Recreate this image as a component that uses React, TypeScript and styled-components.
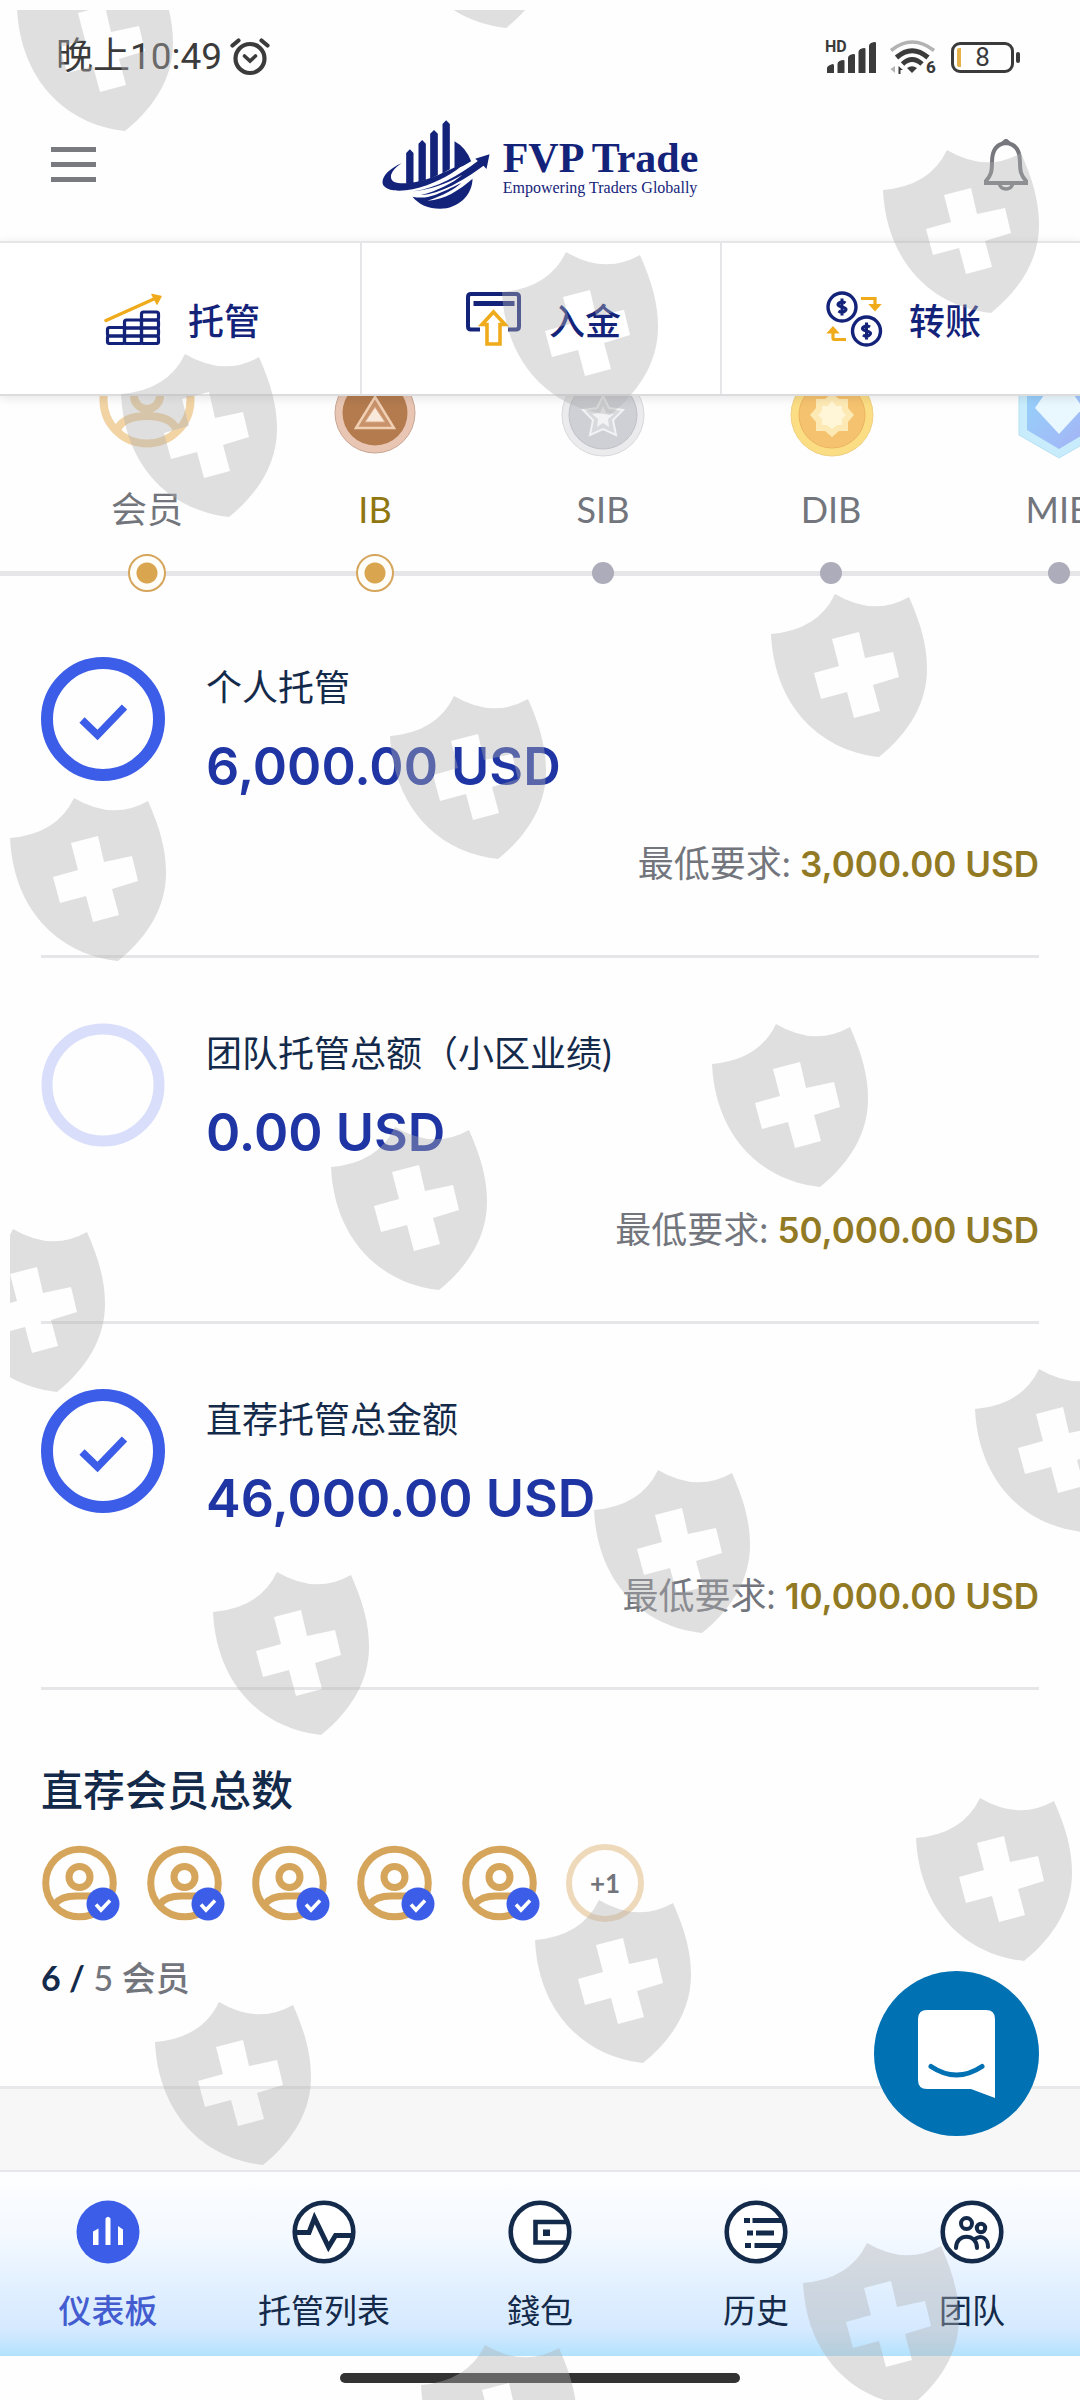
import React from "react";
import styled, { createGlobalStyle } from "styled-components";

const color = {
  navy: "#142a4a",
  brand: "#14237a",
  blue: "#3b5de7",
  amount: "#1f35a3",
  gold: "#927a24",
  tan: "#d6a55c",
  amber: "#f0ab1c",
  gray: "#73757d",
  line: "#e6e6e8",
};

const latin = '"Lato", "Noto Sans CJK SC", sans-serif';
const numeric = '"Inter", "Noto Sans CJK SC", sans-serif';

const GlobalStyle = createGlobalStyle`
  * { box-sizing: border-box; }
  body { margin: 0; background: #fefefe; font-family: ${latin}; color: ${color.navy}; }
  button { border: 0; padding: 0; background: none; font: inherit; color: inherit; cursor: pointer; }
  a { color: inherit; text-decoration: none; }
  h2, h3, p, ul, ol { margin: 0; padding: 0; list-style: none; }
  svg { display: block; flex: none; }
`;

const Page = styled.div`
  position: relative;
  display: flex;
  flex-direction: column;
  min-height: 100vh;
  overflow: hidden;
`;

/* ---------- status bar ---------- */

const StatusBar = styled.div`
  display: flex;
  align-items: center;
  justify-content: space-between;
  padding: 26px 66px 0 56px;
  height: 88px;
  color: #3b3b3b;
`;

const StatusGroup = styled.div<{ $gap: number }>`
  display: flex;
  align-items: center;
  gap: ${(p) => p.$gap}px;
`;

const Clock = styled.span`
  font: 400 37px/44px "Roboto", "Noto Sans CJK SC", sans-serif;
`;

const AlarmIcon = () => (
  <svg width="40" height="40" viewBox="0 0 40 40" fill="none" stroke="#3b3b3b" strokeWidth="4.2" strokeLinecap="round">
    <circle cx="20" cy="21.5" r="14.5" />
    <path d="M2.5 8.5 8.5 3.5M37.5 8.5 31.5 3.5" />
    <path d="m14.5 19 5.5 5 5.5-5" strokeWidth="3.6" />
  </svg>
);

const SignalIcon = () => (
  <svg width="52" height="36" viewBox="0 0 52 36" fill="#3b3b3b">
    <text x="0" y="13" fontFamily="Roboto, sans-serif" fontWeight="700" fontSize="16">HD</text>
    <path d="M2 34v-5q0-1.500 2-2.500 5-3 5 0v7.500zM12.500 34v-9q0-2 2-3 5-2 5 0v12zM23 34v-15q0-2 2-3 5-2 5 0v18zM33.500 34v-21q0-2 2-3 5-2 5 0v24zM44 34v-27q0-2 2-3 5-2 5 0v30z" />
  </svg>
);

const WifiIcon = () => (
  <svg width="50" height="38" viewBox="0 0 50 38" fill="none" stroke="#3b3b3b" strokeWidth="4">
    <path d="M2 12.5Q23 -4.5 45 12.5" stroke="#b3b3b3" strokeWidth="3.6" />
    <path d="M7.5 19.5Q23 6 39 19.5" strokeWidth="5" />
    <path d="M13.5 26Q23 17 33 26" strokeWidth="5" />
    <path d="m18 30q5-3.5 10 0l-5 5z" fill="#3b3b3b" stroke="none" />
    <path d="M6 28v7l-4.5-4z" fill="#b3b3b3" stroke="none" />
    <path d="M9.5 36v-8l4.5 4h-2.5v4z" fill="#3b3b3b" stroke="none" />
    <text x="37" y="35" fill="#3b3b3b" stroke="none" fontFamily="Roboto, sans-serif" fontWeight="800" fontSize="17">6</text>
  </svg>
);

const Battery = styled.div`
  position: relative;
  display: flex;
  align-items: center;
  justify-content: center;
  width: 63px;
  height: 31px;
  border: 3px solid #3b3b3b;
  border-radius: 9px;
  font: 400 26px/26px "Roboto", sans-serif;

  &::before {
    content: "";
    position: absolute;
    left: 3px;
    top: 3px;
    bottom: 3px;
    width: 4px;
    border-radius: 2px 0 0 2px;
    background: #e6b04a;
  }

  &::after {
    content: "";
    position: absolute;
    right: -9px;
    top: 7px;
    width: 4px;
    height: 11px;
    border-radius: 2px;
    background: #3b3b3b;
  }
`;

/* ---------- header ---------- */

const TopBar = styled.header`
  display: grid;
  grid-template-columns: 1fr auto 1fr;
  align-items: center;
  height: 153px;
  padding: 0 51px;
`;

const MenuButton = styled.button`
  justify-self: start;
  display: grid;
  gap: 10px;
  width: 45px;

  span {
    height: 5px;
    background: #797980;
  }
`;

const BellButton = styled.button`
  justify-self: end;
`;

const BellIcon = () => (
  <svg width="46" height="52" viewBox="0 0 46 52" fill="none" stroke="#77787e" strokeWidth="4">
    <path d="M23 4C11.5 5 9 14 9 23C9 33 8 36 3 42V44H43V42C38 36 37 33 37 23C37 14 34.5 5 23 4Z" />
    <path d="M19 4.5 23 1 27 4.5" strokeWidth="3" />
    <path d="M16.5 45.5Q18 50 23 50T29.5 45.5" strokeWidth="3.5" />
  </svg>
);

const Brand = styled.a`
  display: flex;
  align-items: center;
  gap: 13px;
  color: ${color.brand};
  font-family: "Liberation Serif", serif;
  white-space: nowrap;
`;

const BrandText = styled.span`
  display: grid;
  padding-top: 4px;
`;

const BrandName = styled.strong`
  font-size: 42px;
  line-height: 42px;
`;

const BrandTagline = styled.span`
  font-size: 16px;
  line-height: 18px;
`;

const BrandMark = () => (
  <svg width="108" height="89" viewBox="62 58 323 267" fill={color.brand}>
    <path d="M134 250V157L145 146 156 157V247ZM171 244V129L182 118 193 129V238ZM206 234V99L217.5 88 229 99V223ZM243 218V70L254 59 265 70V206Z" />
    <path d="M279 122Q313 140 329 182Q306 198 279 206Z" />
    <path d="M120 188C88 210 80 232 97 243C125 256 183 242 232 222C270 206 298 192 322 176C296 205 246 236 196 254C146 272 88 278 68 257C51 237 80 205 120 188Z" />
    <path d="M155 272C227 262 290 226 349 181L341 174 384 161 375 205 366 195C305 240 236 280 178 283C226 271 275 247 303 222C256 250 207 266 155 272Z" />
    <path d="M153 288Q177 293 202 288C226 283 280 257 300 246C278 267 246 283 198 300C248 298 296 267 333 234C333 283 290 324 236 324C201 324 171 311 153 288Z" />
  </svg>
);

/* ---------- quick actions ---------- */

const QuickActions = styled.nav`
  position: relative;
  display: grid;
  grid-template-columns: repeat(3, 1fr);
  height: 155px;
  border-top: 2px solid ${color.line};
  border-bottom: 2px solid #dcdcdf;
  background: #fff;
  box-shadow: 0 2px 10px rgba(0, 0, 0, 0.1);
`;

const QuickAction = styled.button`
  display: flex;
  align-items: center;
  justify-content: center;
  gap: 26px;
  padding-left: 4px;
  color: ${color.brand};
  font-size: 36px;
  font-weight: 500;
  line-height: 44px;

  & + & {
    border-left: 2px solid ${color.line};
  }
`;

const QuickActionLabel = styled.span`
  padding-top: 4px;
`;

const EscrowIcon = () => (
  <svg width="58" height="52" viewBox="0 0 58 52" fill="none" stroke={color.brand} strokeWidth="3.2">
    <rect x="3.5" y="34.5" width="17" height="8.5" rx="2" />
    <rect x="3.5" y="43" width="17" height="7.5" rx="2" />
    <rect x="20.5" y="27" width="17" height="8" rx="2" />
    <rect x="20.5" y="35" width="17" height="8" rx="2" />
    <rect x="20.5" y="43" width="17" height="7.5" rx="2" />
    <rect x="37.5" y="19" width="17" height="8" rx="2" />
    <rect x="37.5" y="27" width="17" height="8" rx="2" />
    <rect x="37.5" y="35" width="17" height="8" rx="2" />
    <rect x="37.5" y="43" width="17" height="7.5" rx="2" />
    <path d="M2 27.5 51 5.5" stroke={color.amber} strokeWidth="3.4" strokeLinecap="round" />
    <path d="M48 1.5 57 3.5 53 11Z" fill={color.amber} stroke={color.amber} strokeWidth="1.5" strokeLinejoin="round" />
  </svg>
);

const DepositIcon = () => (
  <svg width="58" height="54" viewBox="0 0 58 54" fill="none" stroke={color.brand} strokeWidth="4">
    <path d="M15 37.5H6Q3 37.5 3 34.5V5Q3 2 6 2H51Q54 2 54 5V34.5Q54 37.5 51 37.5H43" />
    <path d="M8.5 11.5H49.5" strokeWidth="5" />
    <path d="M28.5 20 40 32.5H35V52H22V32.5H17Z" stroke={color.amber} strokeWidth="3.6" />
  </svg>
);

const TransferIcon = () => (
  <svg width="58" height="56" viewBox="0 0 58 56" fill="none" stroke={color.brand} strokeWidth="3.4">
    <circle cx="17" cy="16" r="14" />
    <circle cx="41.5" cy="40" r="14" />
    <g strokeWidth="3" strokeLinejoin="round">
      <path d="M20.5 12Q17 9.5 14 12T17 16T20 20T13.500 20M17 7.5V24.5" />
      <path d="M45 36Q41.5 33.5 38.5 36T41.5 40T44.5 44T38 44M41.5 31.5V48.5" />
    </g>
    <g stroke={color.amber} strokeWidth="3.2">
      <path d="M36 7.5H50V15" />
      <path d="M45.5 14H54.5L50 19Z" fill={color.amber} strokeWidth="2" />
      <path d="M21 48.5H9.5Q8 48.5 8 47V41" />
      <path d="M3.5 41.5H12.5L8 36.5Z" fill={color.amber} strokeWidth="2" />
    </g>
  </svg>
);

/* ---------- rank track ---------- */

const RankTrack = styled.ol`
  display: flex;
  overflow: hidden;
  height: 196px;
  padding-left: 33px;
  background: linear-gradient(${color.line}, ${color.line}) 0 175px / 100% 5px no-repeat;
`;

const RankStep = styled.li<{ $active?: boolean }>`
  flex: 0 0 228px;
  display: grid;
  grid-template-rows: 64px 48px 38px;
  row-gap: 23px;
  justify-items: center;
  align-content: start;
  font-size: 36px;
  line-height: 44px;
  color: ${(p) => (p.$active ? "#8f7610" : color.gray)};
`;

const RankLabel = styled.span`
  align-self: end;
`;

const RankDot = styled.span<{ $reached: boolean }>`
  align-self: center;
  width: ${(p) => (p.$reached ? 38 : 22)}px;
  height: ${(p) => (p.$reached ? 38 : 22)}px;
  border-radius: 50%;
  border: ${(p) => (p.$reached ? `2px solid ${color.tan}` : "0")};
  background: ${(p) => (p.$reached ? "radial-gradient(circle, #d9a54e 10px, #fffdf8 11px)" : "#acacba")};
`;

const MemberMedal = () => (
  <svg width="96" height="64" viewBox="0 0 96 64" fill="none" stroke="#f1d3a4" strokeWidth="8">
    <circle cx="48" cy="4" r="43.5" />
    <circle cx="48" cy="0" r="13" />
    <path d="M18 34Q24 20 48 20T78 34" />
  </svg>
);

const BronzeMedal = () => (
  <svg width="96" height="64" viewBox="0 0 96 64">
    <circle cx="48" cy="17" r="40" fill="#e8c6b3" stroke="#c9a592" />
    <circle cx="48" cy="17" r="32.5" fill="#b37b4e" />
    <path d="M48 1 67 32H29Z" fill="#c8936b" stroke="#f1cfb3" strokeWidth="2.5" />
    <path d="M48 11 58 26H38Z" fill="#f9e9da" stroke="#dba987" />
  </svg>
);

const SilverMedal = () => (
  <svg width="96" height="64" viewBox="0 0 96 64">
    <circle cx="48" cy="19" r="41" fill="#ebebed" stroke="#d8d9dc" />
    <circle cx="48" cy="19" r="34" fill="#cfd0d6" stroke="#c0c2c8" />
    <path d="m48 0 6 12 14 2-10 10 3 15-13-6-13 6 3-15-10-10 14-2z" fill="#d8d9dd" stroke="#f2f2f4" strokeWidth="2" />
    <path d="m48 10 3 7 8 1-6 5 1 8-6-4-6 4 1-8-6-5 8-1z" fill="#f3f3f5" />
  </svg>
);

const GoldMedal = () => (
  <svg width="96" height="64" viewBox="0 0 96 64">
    <circle cx="49" cy="19" r="41" fill="#fbdd84" stroke="#f0d082" />
    <circle cx="49" cy="19" r="33" fill="#f5c26f" stroke="#edb45f" />
    <path d="M49-3 56 3H65V12L71 19 65 26V35H56L49 41 42 35H33V26L27 19 33 12V3H42Z" fill="#fde9b4" />
    <path d="M49 5 53 10H59V15L63 19 59 23V29H54L49 33 44 29H39V23L35 19 39 15V10H45Z" fill="#fff6d8" />
  </svg>
);

const DiamondMedal = () => (
  <svg width="96" height="64" viewBox="0 0 96 64">
    <defs>
      <linearGradient id="gem" x1="0" y1="0" x2="1" y2="1">
        <stop offset="0" stopColor="#93d5fb" />
        <stop offset="1" stopColor="#a6b1f5" />
      </linearGradient>
    </defs>
    <path d="M8 -20H88V39L48 62 8 39Z" fill="#c8ecfb" stroke="#b5e2f5" />
    <path d="M16 -20H80V34L48 53 16 34Z" fill="url(#gem)" />
    <path d="M24 12 35 -4H61L72 12 48 38Z" fill="#e9f7ff" />
  </svg>
);

/* ---------- metrics ---------- */

const Metric = styled.section`
  display: grid;
  grid-template-columns: 124px 1fr;
  column-gap: 41px;
  margin: 0 41px;
  padding: 65px 0 69px;
  border-bottom: 3px solid ${color.line};
`;

const MetricBody = styled.div`
  display: grid;
  row-gap: 26px;
  padding-top: 8px;
`;

const MetricTitle = styled.h3`
  font-size: 36px;
  font-weight: 400;
  line-height: 44px;
  white-space: nowrap;
`;

const MetricAmount = styled.p`
  font-family: ${numeric};
  font-size: 52px;
  font-weight: 600;
  line-height: 64px;
  color: ${color.amount};
`;

const Requirement = styled.p`
  grid-column: 1 / -1;
  margin-top: 42px;
  text-align: right;
  font-size: 36px;
  line-height: 44px;
  color: ${color.gray};

  strong {
    font-family: ${numeric};
    font-size: 35px;
    font-weight: 600;
    color: ${color.gold};
  }
`;

const ProgressRing = ({ done }: { done: boolean }) => (
  <svg width="124" height="124" viewBox="0 0 124 124" fill="none">
    <circle cx="62" cy="62" r="56" stroke={done ? color.blue : "#d9defb"} strokeWidth={done ? 12 : 11} />
    {done && <path d="M41 63 56.5 78 83.5 50" stroke={color.blue} strokeWidth="7.5" />}
  </svg>
);

/* ---------- referrals ---------- */

const Referrals = styled.section`
  padding: 74px 41px 86px;
`;

const SectionTitle = styled.h2`
  font-size: 42px;
  font-weight: 500;
  line-height: 52px;
`;

const AvatarRow = styled.ul`
  display: flex;
  gap: 25px;
  margin: 28px 0 34px;
`;

const MoreCount = styled.li`
  display: grid;
  place-items: center;
  width: 78px;
  height: 78px;
  border: 6px solid #efd9bb;
  border-radius: 50%;
  font: 700 26px/32px ${latin};
  color: ${color.gray};
`;

const ReferralCount = styled.p`
  font-size: 34px;
  font-weight: 500;
  line-height: 44px;
  color: ${color.gray};

  strong {
    font-weight: 700;
    color: ${color.navy};
  }
`;

const MemberAvatar = () => (
  <svg width="80" height="78" viewBox="0 0 80 78" fill="none" stroke={color.tan} strokeWidth="7">
    <circle cx="38.5" cy="39" r="33.8" />
    <circle cx="38.5" cy="33" r="10.5" />
    <path d="M14 60Q20 52 35 52H50" />
    <circle cx="62" cy="60" r="16.5" fill={color.blue} stroke="none" />
    <path d="m55 60.5 5 5.5 9-9.5" stroke="#fff" strokeWidth="3.6" />
  </svg>
);

const Spacer = styled.div`
  flex: 1;
  border-top: 3px solid #e8e8ea;
  background: #f7f7f7;
`;

/* ---------- bottom navigation ---------- */

const TabBar = styled.nav`
  display: grid;
  grid-template-columns: repeat(5, 1fr);
  height: 186px;
  padding-top: 28px;
  border-top: 2px solid #e6e7ec;
  background: linear-gradient(#fdfeff 0%, #f4f9ff 35%, #e2f0ff 62%, #d5e9ff 86%, #b3e2fd 100%);
`;

const Tab = styled.a<{ $current?: boolean }>`
  display: flex;
  flex-direction: column;
  align-items: center;
  gap: 24px;
  font-size: 33px;
  font-weight: ${(p) => (p.$current ? 500 : 400)};
  line-height: 44px;
  color: ${(p) => (p.$current ? "#435cd0" : color.navy)};
`;

const TabGlyph = ({ children }: { children: React.ReactNode }) => (
  <svg width="64" height="64" viewBox="0 0 64 64" fill="none" stroke={color.navy} strokeWidth="4.6">
    <circle cx="32" cy="32" r="29.3" fill="#fff" />
    {children}
  </svg>
);

const DashboardIcon = () => (
  <svg width="64" height="64" viewBox="0 0 64 64" fill="#fff">
    <circle cx="32" cy="32" r="31.5" fill={color.blue} />
    <path d="M17 45V31.5L22.5 28.5V45ZM29.5 45V18.5Q32 15 34.5 18.5V45ZM42 45V26L47 29.5V45Z" />
  </svg>
);

const EscrowListIcon = () => (
  <TabGlyph>
    <path d="M4 32.5H17L22.5 18 36.5 47 43.5 35.5H60" strokeWidth="5" />
  </TabGlyph>
);

const WalletIcon = () => (
  <TabGlyph>
    <path d="M58 22H27.5V42.5H58" />
    <path d="M35 29.5H42V36H35Z" fill={color.navy} stroke="none" />
  </TabGlyph>
);

const HistoryIcon = () => (
  <TabGlyph>
    <path d="M20 20.5H26M28.5 20.5H58M23 33H29M32 33H50M21 45.5H27M30.5 45.5H59" strokeWidth="5" />
  </TabGlyph>
);

const TeamIcon = () => (
  <TabGlyph>
    <g strokeWidth="4">
      <circle cx="26.5" cy="23.5" r="5.5" />
      <circle cx="41" cy="28" r="4.2" />
      <path d="M16 48C16 33 37 33 37 48M36 38.5C42 34.5 48 39 48 47" strokeLinecap="round" />
    </g>
  </TabGlyph>
);

const HomeIndicator = styled.div`
  display: flex;
  justify-content: center;
  height: 44px;
  padding-top: 17px;

  &::before {
    content: "";
    width: 37%;
    height: 10px;
    border-radius: 5px;
    background: #333;
  }
`;

/* ---------- overlays ---------- */

const ChatButton = styled.button`
  position: absolute;
  right: 41px;
  bottom: 264px;
  width: 165px;
  height: 165px;
  border-radius: 50%;
  background: #0071b2;
`;

const ChatIcon = () => (
  <svg width="165" height="165" viewBox="0 0 165 165">
    <path d="M53 39H112Q121 39 121 48V127L97 118H53Q44 118 44 109V48Q44 39 53 39Z" fill="#fff" />
    <path d="M57 95.5Q82.5 112.5 108 95.5" fill="none" stroke="#0071b2" strokeWidth="5" strokeLinecap="round" />
  </svg>
);

const ShieldLayer = styled.svg`
  position: absolute;
  left: 10px;
  top: 10px;
  width: calc(100% - 10px);
  height: calc(100% - 10px);
  pointer-events: none;
`;

const shields = [
  [398, -135], [17, -32],
  [883, 150], [502, 252], [121, 354],
  [771, 594], [390, 696], [10, 798],
  [712, 1024], [331, 1127], [-51, 1229],
  [975, 1369], [594, 1470], [213, 1572],
  [916, 1798], [535, 1900], [155, 2002],
  [803, 2243], [421, 2345],
];

const shieldPath =
  "M64 0Q103 23 138 3C150 30 156 52 156 75C156 108 139 138 108 163C45 156 3 108 0 40Q47 36 64 0Z" +
  "M61 45 68 72 43 79 50 105 76 98 83 124 109 117 102 91 128 83 122 58 94 64 88 38Z";

/* ---------- data ---------- */

const actions = [
  { label: "托管", Icon: EscrowIcon },
  { label: "入金", Icon: DepositIcon },
  { label: "转账", Icon: TransferIcon },
];

const ranks = [
  { label: "会员", reached: true, Medal: MemberMedal },
  { label: "IB", reached: true, active: true, Medal: BronzeMedal },
  { label: "SIB", reached: false, Medal: SilverMedal },
  { label: "DIB", reached: false, Medal: GoldMedal },
  { label: "MIB", reached: false, Medal: DiamondMedal },
];

const metrics = [
  { title: "个人托管", amount: "6,000.00 USD", minimum: "3,000.00 USD", done: true },
  { title: "团队托管总额（小区业绩)", amount: "0.00 USD", minimum: "50,000.00 USD", done: false },
  { title: "直荐托管总金额", amount: "46,000.00 USD", minimum: "10,000.00 USD", done: true },
];

const tabs = [
  { label: "仪表板", Icon: DashboardIcon, current: true },
  { label: "托管列表", Icon: EscrowListIcon },
  { label: "錢包", Icon: WalletIcon },
  { label: "历史", Icon: HistoryIcon },
  { label: "团队", Icon: TeamIcon },
];

export default function App() {
  return (
    <Page>
      <GlobalStyle />
      <StatusBar>
        <StatusGroup $gap={8}>
          <Clock>晚上10:49</Clock>
          <AlarmIcon />
        </StatusGroup>
        <StatusGroup $gap={12}>
          <SignalIcon />
          <WifiIcon />
          <Battery>8</Battery>
        </StatusGroup>
      </StatusBar>
      <TopBar>
        <MenuButton aria-label="菜单">
          <span />
          <span />
          <span />
        </MenuButton>
        <Brand href="#home">
          <BrandMark />
          <BrandText>
            <BrandName>FVP Trade</BrandName>
            <BrandTagline>Empowering Traders Globally</BrandTagline>
          </BrandText>
        </Brand>
        <BellButton aria-label="通知">
          <BellIcon />
        </BellButton>
      </TopBar>
      <QuickActions>
        {actions.map(({ label, Icon }) => (
          <QuickAction key={label}>
            <Icon />
            <QuickActionLabel>{label}</QuickActionLabel>
          </QuickAction>
        ))}
      </QuickActions>
      <RankTrack>
        {ranks.map(({ label, reached, active, Medal }) => (
          <RankStep key={label} $active={active}>
            <Medal />
            <RankLabel>{label}</RankLabel>
            <RankDot $reached={reached} />
          </RankStep>
        ))}
      </RankTrack>
      {metrics.map((m) => (
        <Metric key={m.title}>
          <ProgressRing done={m.done} />
          <MetricBody>
            <MetricTitle>{m.title}</MetricTitle>
            <MetricAmount>{m.amount}</MetricAmount>
          </MetricBody>
          <Requirement>
            最低要求: <strong>{m.minimum}</strong>
          </Requirement>
        </Metric>
      ))}
      <Referrals>
        <SectionTitle>直荐会员总数</SectionTitle>
        <AvatarRow>
          {[1, 2, 3, 4, 5].map((n) => (
            <li key={n}>
              <MemberAvatar />
            </li>
          ))}
          <MoreCount>+1</MoreCount>
        </AvatarRow>
        <ReferralCount>
          <strong>6 /</strong> 5 会员
        </ReferralCount>
      </Referrals>
      <Spacer />
      <TabBar>
        {tabs.map(({ label, Icon, current }) => (
          <Tab key={label} href={`#${label}`} $current={current}>
            <Icon />
            {label}
          </Tab>
        ))}
      </TabBar>
      <HomeIndicator />
      <ChatButton aria-label="客服">
        <ChatIcon />
      </ChatButton>
      <ShieldLayer aria-hidden="true">
        {shields.map(([x, y]) => (
          <path
            key={`${x},${y}`}
            d={shieldPath}
            transform={`translate(${x - 10} ${y - 10})`}
            fill="#b1b1b1"
            fillOpacity="0.4"
            fillRule="evenodd"
          />
        ))}
      </ShieldLayer>
    </Page>
  );
}
